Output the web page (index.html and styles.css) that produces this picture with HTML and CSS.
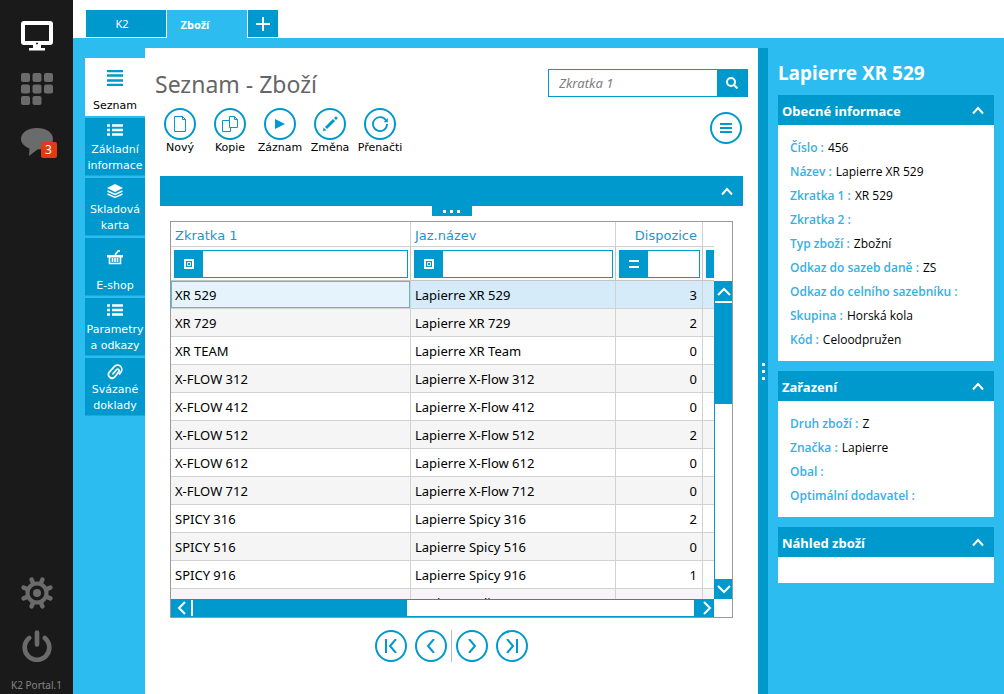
FILE: index.html
```html
<!DOCTYPE html>
<html lang="cs">
<head>
<meta charset="utf-8">
<title>K2 Portal – Zboží</title>
<link rel="stylesheet" href="styles.css">
</head>
<body>
<svg class="defs" aria-hidden="true">
  <symbol id="up" viewBox="0 0 12 9"><path d="M1 7.500 6 2l5 5.500" fill="none" stroke="currentColor" stroke-width="2"/></symbol>
  <symbol id="list" viewBox="0 0 16 12"><path d="M0 1.500h3M5 1.500h11M0 6h3M5 6h11M0 10.500h3M5 10.500h11" stroke="currentColor" stroke-width="2.400"/></symbol>
  <symbol id="contains" viewBox="0 0 10 10"><path d="M1 1h8v8H1z" fill="none" stroke="currentColor" stroke-width="2"/><path d="M3.500 3.500h3v3h-3z" fill="none" stroke="currentColor"/></symbol>
</svg>
<div class="app">
  <nav class="rail">
    <button class="rail-btn active" aria-label="Plocha"><svg width="32" height="32" viewBox="0 0 32 32"><path fill-rule="evenodd" fill="currentColor" d="M3 1h26a3 3 0 0 1 3 3v18a3 3 0 0 1-3 3H3a3 3 0 0 1-3-3V4a3 3 0 0 1 3-3zM4 5v16h24V5z"/><path fill="currentColor" d="M12 25h8v3h4v2.500H8V28h4z"/><circle cx="16" cy="23.500" r="1" fill="#1a1a1a"/></svg></button>
    <button class="rail-btn" aria-label="Aplikace"><svg width="32" height="32" viewBox="0 0 32 32" fill="currentColor"><rect width="9" height="9" rx="2"/><rect x="11.500" width="9" height="9" rx="2"/><rect x="23" width="9" height="9" rx="2"/><rect y="11.500" width="9" height="9" rx="2"/><rect x="11.500" y="11.500" width="9" height="9" rx="2"/><rect x="23" y="11.500" width="9" height="9" rx="2"/><rect y="23" width="9" height="9" rx="2"/><rect x="11.500" y="23" width="9" height="9" rx="2"/></svg></button>
    <button class="rail-btn" aria-label="Zprávy"><svg width="32" height="32" viewBox="0 0 32 32"><path fill="currentColor" d="M16 2C7 2 0 6.500 0 13c0 4 3.500 7.500 8.500 9.500L8 30l8.500-6.500C25 23.500 32 19.500 32 13S25 2 16 2z"/></svg><span class="badge">3</span></button>
    <span class="spacer"></span>
    <button class="rail-btn" aria-label="Nastavení"><svg width="32" height="32" viewBox="-16 -16 32 32"><g stroke="currentColor" stroke-width="4.400" stroke-linecap="round"><path d="M-5.400-13.400 5.400 13.400M5.400-13.400-5.400 13.400M-13.400-5.400 13.400 5.400M-13.400 5.400 13.400-5.400"/></g><circle r="9.500" fill="#1a1a1a" stroke="currentColor" stroke-width="4"/><circle r="4" fill="currentColor"/></svg></button>
    <button class="rail-btn" aria-label="Odhlásit"><svg width="32" height="32" viewBox="0 0 32 32" fill="none" stroke="currentColor" stroke-width="4.600" stroke-linecap="round"><path d="M8.200 8a12.300 12.300 0 1 0 15.600 0M16 2.500v12"/></svg></button>
    <small class="version">K2 Portal.1</small>
  </nav>

  <div class="workspace">
    <header class="tabs">
      <button class="tab">K2</button>
      <button class="tab current">Zboží</button>
      <button class="tab add" aria-label="Nová záložka"><svg width="14" height="14" viewBox="0 0 14 14"><path d="M7 0v14M0 7h14" stroke="#fff" stroke-width="2"/></svg></button>
    </header>

    <div class="body">
      <nav class="menu">
        <button class="menu-item selected"><svg width="16" height="16" viewBox="0 0 16 16"><path d="M0 1h16M0 5.500h16M0 10.500h16M0 15h16" stroke="currentColor" stroke-width="2.400"/></svg><span>Seznam</span></button>
        <button class="menu-item"><svg width="16" height="12"><use href="#list"/></svg><span>Základní informace</span></button>
        <button class="menu-item"><svg width="16" height="14" viewBox="0 0 16 14"><path d="M8 0l8 4-8 4-8-4z" fill="currentColor"/><path d="M.5 7 8 10.500 15.500 7M.5 10 8 13.300 15.500 10" fill="none" stroke="currentColor" stroke-width="1.400"/></svg><span>Skladová karta</span></button>
        <button class="menu-item single"><svg width="16" height="15" viewBox="0 0 16 15"><path d="M0 5h16v2.500H0z" fill="currentColor"/><path d="M2.500 7v6.500h11V7M5.500 8v4M8 8v4M10.500 8v4M8 5l3-4h2" fill="none" stroke="currentColor" stroke-width="1.600"/></svg><span>E-shop</span></button>
        <button class="menu-item"><svg width="16" height="12"><use href="#list"/></svg><span>Parametry a odkazy</span></button>
        <button class="menu-item"><svg width="16" height="16" viewBox="0 0 16 16"><path d="M6 9.800 9.800 5.500a1.500 1.500 0 0 1 2 2.200L7.600 13.200a3.700 3.700 0 0 1-5.600-4.700l5-5.600a4.300 4.300 0 0 1 7 5L12.500 10" fill="none" stroke="currentColor" stroke-width="1.700" stroke-linecap="round"/></svg><span>Svázané doklady</span></button>
      </nav>

      <main class="content">
        <div class="top">
          <h1>Seznam - Zboží</h1>
          <form class="search"><input type="search" placeholder="Zkratka 1" aria-label="Hledat"><button type="button" aria-label="Hledat"><svg width="12" height="12" viewBox="0 0 12 12" fill="none" stroke="#fff" stroke-width="2"><circle cx="5" cy="5" r="4"/><path d="m8 8 3.500 3.500"/></svg></button></form>
        </div>
        <div class="toolbar">
          <button class="tool"><span class="ring"><svg width="12" height="16" viewBox="0 0 12 16"><path d="M.5.500h8l3 3v12H.5zM8.500.500v3h3" fill="none" stroke="currentColor"/></svg></span>Nový</button>
          <button class="tool"><span class="ring"><svg width="16" height="16" viewBox="0 0 16 16" fill="none" stroke="currentColor"><path d="M8.500 11.500v4h-8v-11h7M7.500.500h5l3 3v8h-8zM12.500.500v3h3"/></svg></span>Kopie</button>
          <button class="tool"><span class="ring"><svg width="10" height="10" viewBox="0 0 10 10"><path d="M0 0l10 5-10 5z" fill="currentColor"/></svg></span>Záznam</button>
          <button class="tool"><span class="ring"><svg width="16" height="16" viewBox="0 0 16 16"><path d="M4 12 12 4" stroke="currentColor" stroke-width="3"/><path d="m1 15 .6-3.500 2.900 2.900zM12 2l1-1a1.200 1.200 0 0 1 1.800 0 1.200 1.200 0 0 1 .2 2l-1 1z" fill="currentColor"/></svg></span>Změna</button>
          <button class="tool"><span class="ring"><svg width="16" height="16" viewBox="0 0 16 16"><path d="M14 4.500A7 7 0 1 0 15 8" fill="none" stroke="currentColor" stroke-width="1.800"/><path d="M15.800 2v4.200h-4.200z" fill="currentColor"/></svg></span>Přenačti</button>
          <button class="ring more" aria-label="Nabídka"><svg width="12" height="10" viewBox="0 0 12 10"><path d="M0 1h12M0 5h12M0 9h12" stroke="currentColor" stroke-width="2"/></svg></button>
        </div>
        <div class="filterbar"><button aria-label="Sbalit"><svg width="12" height="9"><use href="#up"/></svg></button></div>
        <button class="handle" aria-label="Rozbalit"><i></i><i></i><i></i></button>

        <section class="grid">
          <div class="table-wrap">
            <table>
              <colgroup><col class="c-code"><col><col class="c-num"><col class="c-rest"></colgroup>
              <thead>
                <tr class="names"><th>Zkratka 1</th><th>Jaz.název</th><th class="num">Dispozice</th><th></th></tr>
                <tr class="filters">
                  <td><div class="filter"><button aria-label="Obsahuje"><svg width="10" height="10"><use href="#contains"/></svg></button><input aria-label="Filtr Zkratka 1"></div></td>
                  <td><div class="filter"><button aria-label="Obsahuje"><svg width="10" height="10"><use href="#contains"/></svg></button><input aria-label="Filtr Jaz.název"></div></td>
                  <td><div class="filter"><button aria-label="Rovná se"><svg width="10" height="8" viewBox="0 0 10 8"><path d="M0 1h10M0 7h10" stroke="#fff" stroke-width="2"/></svg></button><input aria-label="Filtr Dispozice"></div></td>
                  <td><div class="filter"></div></td>
                </tr>
              </thead>
              <tbody>
                <tr class="sel"><td>XR 529</td><td>Lapierre XR 529</td><td class="num">3</td><td></td></tr>
                <tr><td>XR 729</td><td>Lapierre XR 729</td><td class="num">2</td><td></td></tr>
                <tr><td>XR TEAM</td><td>Lapierre XR Team</td><td class="num">0</td><td></td></tr>
                <tr><td>X-FLOW 312</td><td>Lapierre X-Flow 312</td><td class="num">0</td><td></td></tr>
                <tr><td>X-FLOW 412</td><td>Lapierre X-Flow 412</td><td class="num">0</td><td></td></tr>
                <tr><td>X-FLOW 512</td><td>Lapierre X-Flow 512</td><td class="num">2</td><td></td></tr>
                <tr><td>X-FLOW 612</td><td>Lapierre X-Flow 612</td><td class="num">0</td><td></td></tr>
                <tr><td>X-FLOW 712</td><td>Lapierre X-Flow 712</td><td class="num">0</td><td></td></tr>
                <tr><td>SPICY 316</td><td>Lapierre Spicy 316</td><td class="num">2</td><td></td></tr>
                <tr><td>SPICY 516</td><td>Lapierre Spicy 516</td><td class="num">0</td><td></td></tr>
                <tr><td>SPICY 916</td><td>Lapierre Spicy 916</td><td class="num">1</td><td></td></tr>
                <tr><td>XELIUS 100</td><td>Lapierre Xelius 100</td><td class="num"></td><td></td></tr>
              </tbody>
            </table>
          </div>
          <div class="vscroll">
            <button class="vup" aria-label="Nahoru"><svg width="14" height="9" viewBox="0 0 14 9"><path d="M1 8 7 2l6 6" fill="none" stroke="#fff" stroke-width="2"/></svg></button>
            <div class="vthumb"></div>
            <button class="vdown" aria-label="Dolů"><svg width="14" height="9" viewBox="0 0 14 9"><path d="m1 1 6 6 6-6" fill="none" stroke="#fff" stroke-width="2"/></svg></button>
          </div>
          <div class="hscroll">
            <button class="hleft" aria-label="Vlevo"><svg width="9" height="14" viewBox="0 0 9 14"><path d="M8 1 2 7l6 6" fill="none" stroke="#fff" stroke-width="2"/></svg></button>
            <div class="hthumb"></div>
            <button class="hright" aria-label="Vpravo"><svg width="9" height="14" viewBox="0 0 9 14"><path d="m1 1 6 6-6 6" fill="none" stroke="#fff" stroke-width="2"/></svg></button>
          </div>
        </section>

        <div class="pager">
          <button class="ring" aria-label="První"><svg width="14" height="14" viewBox="0 0 14 14"><path d="M2 0v14M12 0 6 7l6 7" fill="none" stroke="currentColor" stroke-width="2"/></svg></button>
          <button class="ring" aria-label="Předchozí"><svg width="14" height="14" viewBox="0 0 14 14"><path d="M10 0 4 7l6 7" fill="none" stroke="currentColor" stroke-width="2"/></svg></button>
          <span class="divider"></span>
          <button class="ring" aria-label="Další"><svg width="14" height="14" viewBox="0 0 14 14"><path d="m4 0 6 7-6 7" fill="none" stroke="currentColor" stroke-width="2"/></svg></button>
          <button class="ring" aria-label="Poslední"><svg width="14" height="14" viewBox="0 0 14 14"><path d="M12 0v14M2 0l6 7-6 7" fill="none" stroke="currentColor" stroke-width="2"/></svg></button>
        </div>
      </main>

      <div class="splitter"><i></i><i></i><i></i></div>

      <aside class="preview">
        <h2>Lapierre XR 529</h2>
        <section class="card">
          <button class="card-head"><span>Obecné informace</span><svg width="12" height="9"><use href="#up"/></svg></button>
          <dl>
            <div><dt>Číslo :</dt><dd>456</dd></div>
            <div><dt>Název :</dt><dd>Lapierre XR 529</dd></div>
            <div><dt>Zkratka 1 :</dt><dd>XR 529</dd></div>
            <div><dt>Zkratka 2 :</dt><dd></dd></div>
            <div><dt>Typ zboží :</dt><dd>Zbožní</dd></div>
            <div><dt>Odkaz do sazeb daně :</dt><dd>ZS</dd></div>
            <div><dt>Odkaz do celního sazebníku :</dt><dd></dd></div>
            <div><dt>Skupina :</dt><dd>Horská kola</dd></div>
            <div><dt>Kód :</dt><dd>Celoodpružen</dd></div>
          </dl>
        </section>
        <section class="card">
          <button class="card-head"><span>Zařazení</span><svg width="12" height="9"><use href="#up"/></svg></button>
          <dl>
            <div><dt>Druh zboží :</dt><dd>Z</dd></div>
            <div><dt>Značka :</dt><dd>Lapierre</dd></div>
            <div><dt>Obal :</dt><dd></dd></div>
            <div><dt>Optimální dodavatel :</dt><dd></dd></div>
          </dl>
        </section>
        <section class="card">
          <button class="card-head"><span>Náhled zboží</span><svg width="12" height="9"><use href="#up"/></svg></button>
          <div class="empty"></div>
        </section>
      </aside>
    </div>
  </div>
</div>
</body>
</html>
```
FILE: styles.css
```css
:root {
  --blue: #0099cd;
  --sky: #2dbcf0;
  --dark: #1a1a1a;
  --wide: "DejaVu Sans", Verdana, sans-serif;
  --ui: "Noto Sans", "Segoe UI", sans-serif;
}
* { box-sizing: border-box; }
body { margin: 0; font: 13px/20px var(--ui); color: #000; }
button { margin: 0; padding: 0; border: 0; background: none; font: inherit; color: inherit; cursor: pointer; }
input { border: 0; padding: 0; min-width: 0; font: inherit; background: none; outline: none; }
svg { display: block; flex: none; }
.defs { position: absolute; width: 0; height: 0; }

.app { display: flex; height: 100vh; overflow: hidden; }

.rail { flex: none; width: 73px; padding: 20px 0 0; display: flex; flex-direction: column; align-items: center; gap: 21px; background: var(--dark); color: #6b6b6b; }
.rail-btn { position: relative; width: 32px; height: 32px; }
.rail-btn.active { color: #fff; }
.badge { position: absolute; right: -4px; bottom: 0; width: 16px; height: 16px; border-radius: 2px; background: #dd3c14; color: #fff; font-size: 12px; line-height: 16px; }
.spacer { flex: 1; }
.version { font-size: 10px; line-height: 16px; white-space: nowrap; margin-top: -6px; padding-bottom: 1px; color: #858585; }

.workspace { flex: 1; min-width: 0; display: flex; flex-direction: column; background: var(--sky); }
.tabs { display: flex; align-items: flex-start; gap: 1px; height: 38px; padding: 10px 13px 0; background: #fff; }
.tab { width: 80px; height: 27px; display: flex; align-items: center; justify-content: center; background: var(--blue); color: #fff; font-size: 11px; }
.tab:first-child { padding-right: 8px; }
.tab.current { height: 28px; padding: 2px 24px 0 0; background: var(--sky); font-weight: bold; }
.tab.add { width: 30px; }

.body { flex: 1; min-height: 0; display: flex; padding-left: 12px; }
.menu { flex: none; width: 60px; padding-top: 20px; display: flex; flex-direction: column; gap: 2px; font: 11px/16px var(--wide); }
.menu-item { min-height: 58px; padding: 6px 0 1px; display: flex; flex-direction: column; align-items: center; justify-content: space-between; background: var(--blue); color: #fff; border-bottom: 1px solid #1aa9dd; }
.menu-item.selected { background: #fff; color: #000; padding: 12px 0 2px; border: 0; }
.menu-item.selected svg { color: var(--blue); }
.menu-item.single { padding: 12px 0 1px; }

.content { flex: 1; min-width: 0; margin-top: 10px; padding: 16px 10px 32px; display: flex; flex-direction: column; background: #fff; }
.top { display: flex; align-items: center; justify-content: space-between; height: 38px; }
h1 { margin: 0; padding-top: 2px; font: 23px/38px var(--ui); color: #666; }
.search { display: flex; width: 200px; height: 28px; border: 1px solid var(--blue); }
.search input { flex: 1; padding: 0 10px; }
.search input::placeholder { color: #808080; font-style: italic; opacity: 1; }
.search button { width: 30px; display: grid; place-items: center; background: var(--blue); }

.toolbar { display: flex; align-items: flex-start; padding: 6px 6px 0 0; height: 74px; font: 11px/16px var(--wide); }
.tool { width: 50px; display: flex; flex-direction: column; align-items: center; white-space: nowrap; }
.ring { width: 32px; height: 32px; display: grid; place-items: center; border: 2px solid var(--blue); border-radius: 50%; background: #fff; color: var(--blue); }
.more { margin: 4px 0 0 auto; }

.filterbar { margin: 0 5px; height: 30px; display: flex; align-items: center; justify-content: flex-end; padding-right: 10px; background: var(--blue); color: #fff; }
.handle { align-self: center; width: 40px; height: 10px; display: flex; justify-content: center; gap: 4px; padding-top: 4px; background: var(--blue); }
.handle i, .splitter i { width: 3px; height: 3px; background: #fff; }

.grid { flex: 1; min-height: 0; margin: 5px 15px 0; display: grid; grid-template: minmax(0, 1fr) 18px / minmax(0, 1fr) 18px; border: 1px solid #999; }
.table-wrap { overflow: hidden; }
table { width: 100%; table-layout: fixed; border-collapse: separate; border-spacing: 0; }
.c-code { width: 240px; }
.c-num { width: 87px; }
.c-rest { width: 11px; }
th, td { padding: 0 4px; text-align: left; border-right: 1px solid #d0d3d6; border-bottom: 1px solid #d0d3d6; white-space: nowrap; overflow: hidden; }
th:last-child, td:last-child { padding: 0; border-right: 0; }
.names th { height: 25px; padding-top: 3px; font: 13px/21px var(--wide); color: #1f94cb; }
th.num, td.num { padding-right: 5px; text-align: right; }
.filters td { height: 34px; padding: 0 2px 0 3px; background: #fafafa; border-color: #c4c4c4; }
.filters td:last-child { padding-right: 0; }
.filter { height: 28px; display: flex; border: 1px solid var(--blue); background: #fff; }
.filter button { flex: none; width: 28px; display: grid; place-items: center; background: var(--blue); color: #fff; }
.filter input { flex: 1; padding: 0 4px; }
.filters td:last-child .filter { background: var(--blue); }
tbody td { height: 28px; padding-top: 2px; line-height: 25px; }
tbody tr:nth-child(even) { background: #f5f5f5; }
tbody .sel { background: #d5ebfa; }
.sel td:first-child { background: #e5f4fc; box-shadow: inset 0 0 0 1px #66b6c9; }

.vscroll { margin-top: 59px; display: flex; flex-direction: column; border-left: 1px solid var(--blue); }
.vscroll button, .hscroll button { flex: none; display: grid; place-items: center; background: var(--blue); }
.vup { height: 22px; border-bottom: 2px solid #fff; }
.vthumb { height: 101px; background: var(--blue); }
.vdown { height: 20px; margin-top: auto; }
.hscroll { display: flex; border: 1px solid var(--blue); border-right: 0; }
.hscroll .hleft { width: 19px; }
.hthumb { width: 216px; border-left: 2px solid #fff; background: var(--blue); }
.hright { width: 20px; margin-left: auto; padding-left: 6px; }

.pager { margin-top: 12px; display: flex; justify-content: center; gap: 8px; }
.divider { width: 1px; margin: 0 -4px; background: #bbb; }

.splitter { flex: none; width: 10px; margin-top: 10px; display: flex; flex-direction: column; align-items: center; justify-content: center; gap: 4px; background: var(--blue); }

.preview { flex: none; width: 236px; padding: 23px 10px 10px; display: flex; flex-direction: column; gap: 10px; font: 12px/20px "Open Sans", "Segoe UI", sans-serif; }
h2 { margin: 0; font: bold 19px/24px var(--ui); color: #fff; }
.card { background: #fff; }
.card-head { width: 100%; height: 30px; padding: 0 10px 0 4px; display: flex; align-items: center; justify-content: space-between; background: var(--blue); color: #fff; font: bold 13px/20px var(--ui); }
.card-head span { padding-top: 2px; }
dl { margin: 0; padding: 11px 12px 9px; line-height: 24px; }
dl div { display: flex; gap: 4px; white-space: nowrap; }
dt { font-weight: 600; color: #35b0e5; }
dd { margin: 0; }
.empty { height: 26px; }
```
